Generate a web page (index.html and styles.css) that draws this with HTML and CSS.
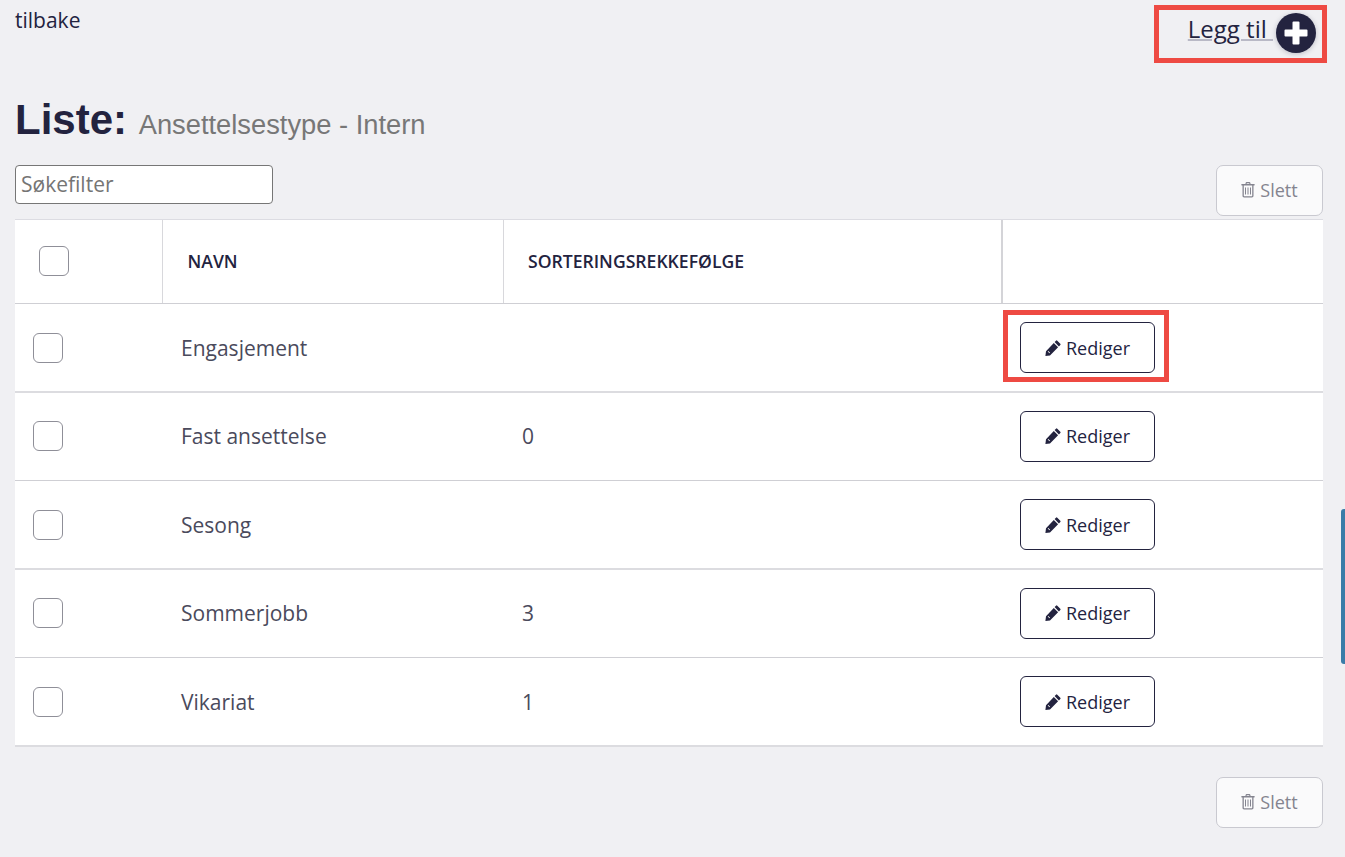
FILE: index.html
```html
<!DOCTYPE html>
<html lang="no">
<head>
<meta charset="utf-8">
<title>Liste</title>
<link rel="stylesheet" href="styles.css">
</head>
<body>
<svg class="defs" width="0" height="0" aria-hidden="true">
  <symbol id="pencil" viewBox="0 0 16 16">
    <path d="M12.300.7 15.300 3.700a.9.9 0 0 1 0 1.300l-1.400 1.400-4.300-4.300L11 .7a.9.9 0 0 1 1.300 0zM8.800 3 13.100 7.300 5 15.400.4 16 1 11.200zM2.700 11.500l1.800 1.800.6-.6-1.800-1.800z" fill-rule="evenodd"/>
  </symbol>
  <symbol id="trash" viewBox="0 0 14 16">
    <path d="M4.500 2V1.400C4.500.6 5.100 0 5.900 0h2.200c.8 0 1.400.6 1.400 1.400V2h3.700c.3 0 .5.200.5.500v.5c0 .3-.2.500-.5.500H12.500v10.300c0 1-.7 1.700-1.600 1.700H3.100c-.9 0-1.600-.7-1.600-1.700V3.500H.800c-.3 0-.5-.2-.5-.5v-.5c0-.3.200-.5.500-.5zM5.700 2h2.600v-.7H5.700zM2.800 3.500v10.300c0 .3.200.5.300.5h7.800c.1 0 .3-.2.300-.5V3.500zM4 5.500h1v7H4zM6.500 5.500h1v7h-1zM9 5.500h1v7H9z" fill-rule="evenodd"/>
  </symbol>
</svg>

<div class="topbar">
  <a class="back">tilbake</a>
  <a class="add">
    <span class="add-label">Legg til </span>
    <span class="add-circle">
      <svg width="24" height="24" viewBox="0 0 24 24"><path d="M9.500.5h5a1 1 0 0 1 1 1v7h7a1 1 0 0 1 1 1v5a1 1 0 0 1-1 1h-7v7a1 1 0 0 1-1 1h-5a1 1 0 0 1-1-1v-7h-7a1 1 0 0 1-1-1v-5a1 1 0 0 1 1-1h7v-7a1 1 0 0 1 1-1z" fill="#fff"/></svg>
    </span>
  </a>
  <span class="marker marker-add"></span>
</div>

<h1 class="title">Liste: <small>Ansettelsestype - Intern</small></h1>

<div class="tools">
  <input class="filter" type="text" placeholder="Søkefilter">
  <button class="btn-delete"><svg class="ico-trash"><use href="#trash"/></svg> Slett</button>
</div>

<div class="table">
  <div class="row head">
    <div class="cell c1"><span class="check"></span></div>
    <div class="cell c2">NAVN</div>
    <div class="cell c3">SORTERINGSREKKEFØLGE</div>
    <div class="cell c4"></div>
  </div>
  <div class="row">
    <div class="cell c1"><span class="check"></span></div>
    <div class="cell c2">Engasjement</div>
    <div class="cell c3"></div>
    <div class="cell c4"><button class="btn-edit"><svg class="ico-pencil"><use href="#pencil"/></svg> Rediger</button><span class="marker marker-edit"></span></div>
  </div>
  <div class="row">
    <div class="cell c1"><span class="check"></span></div>
    <div class="cell c2">Fast ansettelse</div>
    <div class="cell c3">0</div>
    <div class="cell c4"><button class="btn-edit"><svg class="ico-pencil"><use href="#pencil"/></svg> Rediger</button></div>
  </div>
  <div class="row">
    <div class="cell c1"><span class="check"></span></div>
    <div class="cell c2">Sesong</div>
    <div class="cell c3"></div>
    <div class="cell c4"><button class="btn-edit"><svg class="ico-pencil"><use href="#pencil"/></svg> Rediger</button></div>
  </div>
  <div class="row">
    <div class="cell c1"><span class="check"></span></div>
    <div class="cell c2">Sommerjobb</div>
    <div class="cell c3">3</div>
    <div class="cell c4"><button class="btn-edit"><svg class="ico-pencil"><use href="#pencil"/></svg> Rediger</button></div>
  </div>
  <div class="row">
    <div class="cell c1"><span class="check"></span></div>
    <div class="cell c2">Vikariat</div>
    <div class="cell c3">1</div>
    <div class="cell c4"><button class="btn-edit"><svg class="ico-pencil"><use href="#pencil"/></svg> Rediger</button></div>
  </div>
</div>

<div class="bottom">
  <button class="btn-delete"><svg class="ico-trash"><use href="#trash"/></svg> Slett</button>
</div>

<span class="side-tab"></span>
</body>
</html>
```

FILE: styles.css
```css
* { box-sizing: border-box; }
html, body { height: 857px; overflow: hidden; }
body {
  margin: 0;
  padding: 0 22px 0 15px;
  background: #f0f0f3;
  color: #23233f;
  font-family: "Open Sans", sans-serif;
  position: relative;
}
.defs { position: absolute; }

.topbar {
  position: relative;
  height: 94px;
  display: flex;
  justify-content: space-between;
  align-items: flex-start;
}
.back {
  margin-top: 7px;
  font-size: 21px;
  line-height: 27px;
  color: #23233f;
}
.add {
  display: flex;
  align-items: flex-start;
  margin-right: 7px;
  margin-top: 13px;
  font-size: 24px;
  line-height: 32px;
  color: #23233f;
}
.add-label {
  white-space: pre;
  text-decoration: underline;
  text-decoration-color: #b9b9c6;
  text-decoration-thickness: 2px;
}
.add-circle {
  width: 40px;
  height: 40px;
  margin-left: 3px;
  border-radius: 50%;
  background: #23233f;
  display: flex;
  align-items: center;
  justify-content: center;
  box-shadow: 0 1px 5px rgba(35, 35, 63, .25);
}
.marker {
  position: absolute;
  border: 5px solid #ee4a43;
  pointer-events: none;
}
.marker-add { right: -4px; top: 5px; width: 173px; height: 58px; }
.marker-edit { left: 1px; top: 6px; width: 166px; height: 72px; }

.title {
  margin: 0;
  height: 71px;
  font-family: "Liberation Sans", sans-serif;
  font-size: 42px;
  font-weight: 700;
  line-height: 52px;
  color: #23233f;
}
.title small {
  font-size: 27.3px;
  font-weight: 400;
  color: #777777;
}

.tools {
  height: 54px;
  display: flex;
  justify-content: space-between;
  align-items: flex-start;
}
.filter {
  width: 258px;
  height: 39px;
  padding: 0 5px 2px;
  border: 1px solid #767676;
  border-radius: 4px;
  background: #fff;
  font-family: "Open Sans", sans-serif;
  font-size: 21px;
  outline: none;
}
.filter::placeholder { color: #757575; opacity: 1; }

.btn-delete {
  width: 107px;
  height: 51px;
  padding: 0 0 2px;
  border: 1px solid #c9c9d0;
  border-radius: 7px;
  background: #fafafb;
  color: #84848f;
  font-family: "Open Sans", sans-serif;
  font-size: 18px;
  display: flex;
  align-items: center;
  justify-content: center;
  gap: 5px;
}
.ico-trash { width: 14px; height: 16px; fill: #84848f; }

.table {
  background: #fff;
  border-top: 1px solid #dcdce2;
}
.row {
  height: 88px;
  display: flex;
  border-bottom: 1px solid #cfcfd4;
  color: #4a4a5c;
  font-size: 21px;
}
.row:nth-child(even) {
  height: 89px;
  border-bottom: 2px solid #dcdce0;
}
.row:nth-child(odd) .cell { padding-bottom: 1px; }
.row.head {
  height: 84px;
  color: #23233f;
  font-size: 17.6px;
  font-weight: 600;
}
.cell {
  display: flex;
  align-items: center;
  position: relative;
}
.c1 { width: 147px; padding-left: 18px; }
.c2 { width: 341px; padding-left: 19px; }
.c3 { width: 499px; padding-left: 19px; }
.c4 { flex: 1; padding-left: 18px; }
.head .c1 { padding-left: 24px; border-right: 1px solid #d8d8dc; width: 148px; }
.head .c2 { padding-left: 24.5px; border-right: 1px solid #d8d8dc; width: 341px; }
.head .c3 { padding-left: 24px; border-right: 2px solid #d4d4d8; width: 499px; }
.check {
  width: 30px;
  height: 30px;
  border: 1px solid #8f8f98;
  border-radius: 6px;
  background: #fff;
}
.btn-edit {
  width: 135px;
  height: 51px;
  padding: 0;
  border: 1px solid #23233f;
  border-radius: 6px;
  background: #fff;
  color: #23233f;
  font-family: "Open Sans", sans-serif;
  font-size: 18px;
  display: flex;
  align-items: center;
  justify-content: center;
  gap: 5px;
}
.ico-pencil { width: 16px; height: 16px; fill: #23233f; }

.bottom {
  margin-top: 30px;
  display: flex;
  justify-content: flex-end;
}
.side-tab {
  position: absolute;
  right: 0;
  top: 509px;
  width: 4px;
  height: 155px;
  background: #3a7ca8;
  border-radius: 3px 0 0 3px;
}
```
